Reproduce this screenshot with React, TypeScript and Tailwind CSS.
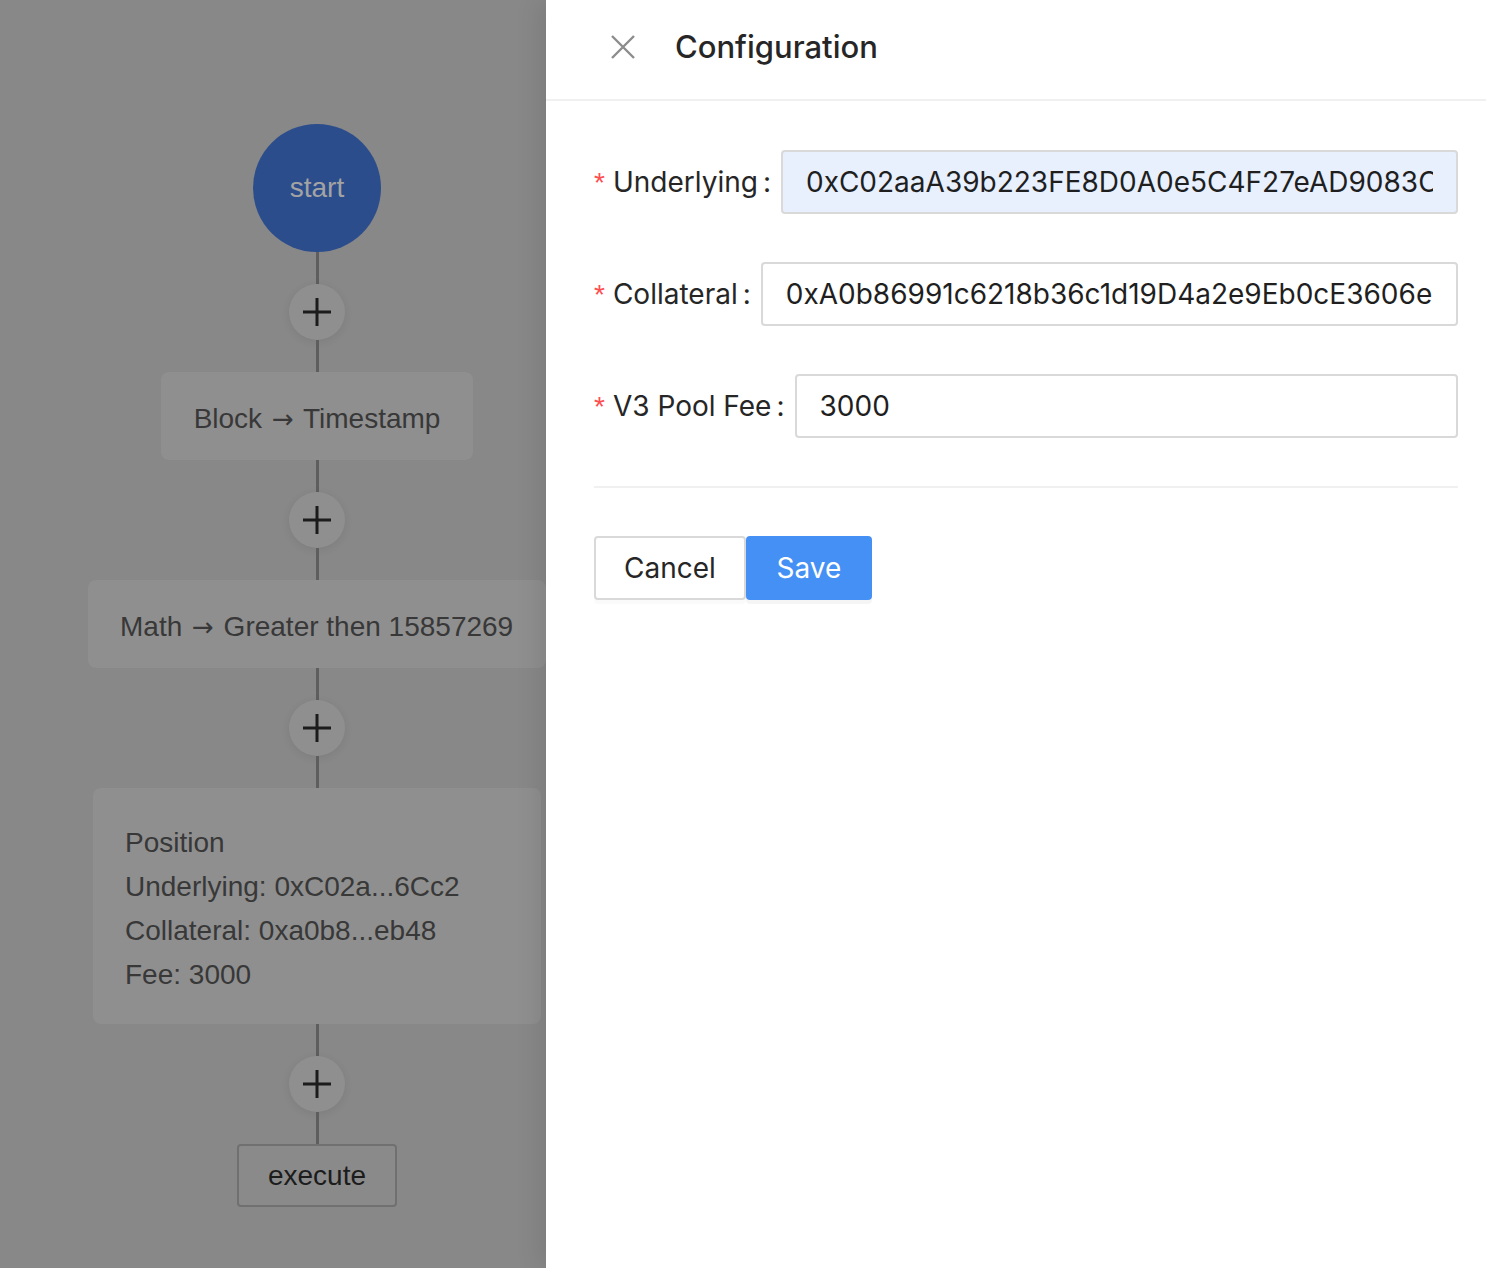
import React from "react";

const Line = ({ h }: { h: number }) => (
  <div className="w-[3px] bg-[#5e5e5e]" style={{ height: h }} />
);

const Plus = () => (
  <div className="w-[56px] h-[56px] rounded-full bg-[#8f8f8f] shadow-[0_2px_8px_rgba(0,0,0,0.08)] flex items-center justify-center">
    <svg width="30" height="30" viewBox="0 0 30 30">
      <path d="M15 1v28M1 15h28" stroke="#1c1c1c" strokeWidth="3" />
    </svg>
  </div>
);

const Arrow = () => (
  <span className="font-['DejaVu_Sans',sans-serif] text-[26px] mx-[2px]">→</span>
);

const Field = ({ label, value, autofill }: { label: string; value: string; autofill?: boolean }) => (
  <div className="flex items-center h-[64px] mb-[48px]">
    <label className="flex items-center text-[28px] text-[#262626] whitespace-nowrap">
      <span className="text-[#ff4d4f] text-[28px] mr-[8px] leading-none mt-[2px] font-['Liberation_Sans',sans-serif]">*</span>
      <span>{label}</span>
      <span className="ml-[5px] mr-[10px]">:</span>
    </label>
    <input
      readOnly
      value={value}
      className={`flex-1 min-w-0 h-[64px] rounded-[4px] border-2 border-[#d9d9d9] px-[23px] text-[28px] text-[#1f1f1f] outline-none ${autofill ? "bg-[#e8f0fe]" : "bg-white"}`}
    />
  </div>
);

export default function App() {
  return (
    <div className="relative w-[1486px] h-[1268px] overflow-hidden bg-[#888888] font-['Liberation_Sans',Arial,sans-serif]">
      {/* flow canvas */}
      <div className="w-[634px] flex flex-col items-center pt-[124px]">
        <div className="w-[128px] h-[128px] rounded-full bg-[#2c4d8c] flex items-center justify-center text-[28px] text-[#a3a3a3]">
          start
        </div>
        <Line h={32} />
        <Plus />
        <Line h={32} />
        <div className="w-[312px] h-[88px] rounded-[8px] bg-[#8f8f8f] flex items-center justify-center pt-[5px] text-[28px] text-[#383838] whitespace-nowrap">
          <span>
            Block <Arrow /> Timestamp
          </span>
        </div>
        <Line h={32} />
        <Plus />
        <Line h={32} />
        <div className="w-[458px] h-[88px] rounded-[8px] bg-[#8f8f8f] flex items-center px-[32px] pt-[5px] text-[28px] text-[#383838] whitespace-nowrap">
          <span>
            Math <Arrow /> Greater then 15857269
          </span>
        </div>
        <Line h={32} />
        <Plus />
        <Line h={32} />
        <div className="w-[448px] h-[236px] rounded-[8px] bg-[#8f8f8f] flex flex-col pt-[33px] px-[32px] text-[28px] leading-[44px] text-[#383838]">
          <div>Position</div>
          <div>Underlying: 0xC02a...6Cc2</div>
          <div>Collateral: 0xa0b8...eb48</div>
          <div>Fee: 3000</div>
        </div>
        <Line h={32} />
        <Plus />
        <Line h={32} />
        <div className="w-[160px] h-[63px] rounded-[4px] border-2 border-[#707070] bg-[#8a8a8a] flex items-center justify-center text-[28px] text-[#1c1c1c]">
          execute
        </div>
      </div>

      {/* drawer */}
      <div className="absolute top-0 right-0 w-[940px] h-full bg-white shadow-[-6px_0_24px_rgba(0,0,0,0.1)] font-['Inter',sans-serif]">
        <div className="h-[101px] border-b-2 border-[#f0f0f0] flex items-center pl-[64px] pb-[5px]">
          <svg width="26" height="26" viewBox="0 0 26 26" className="mr-[39px]">
            <path d="M2 2l22 22M24 2L2 24" stroke="#8c8c8c" strokeWidth="2.4" />
          </svg>
          <div className="text-[31px] font-medium text-[#262626]">Configuration</div>
        </div>
        <div className="pl-[48px] pr-[28px] pt-[49px]">
          <Field label="Underlying" value="0xC02aaA39b223FE8D0A0e5C4F27eAD9083C756Cc2" autofill />
          <Field label="Collateral" value="0xA0b86991c6218b36c1d19D4a2e9Eb0cE3606eB48" />
          <Field label="V3 Pool Fee" value="3000" />
          <div className="h-[2px] bg-[#f0f0f0]" />
          <div className="flex mt-[48px]">
            <button className="w-[152px] h-[64px] rounded-[4px] border-2 border-[#d9d9d9] bg-white text-[28px] text-[#262626] shadow-[0_4px_0_rgba(0,0,0,0.02)]">
              Cancel
            </button>
            <button className="w-[126px] h-[64px] rounded-[4px] bg-[#4490f5] text-[28px] text-white shadow-[0_4px_0_rgba(0,0,0,0.04)]">
              Save
            </button>
          </div>
        </div>
      </div>
    </div>
  );
}
